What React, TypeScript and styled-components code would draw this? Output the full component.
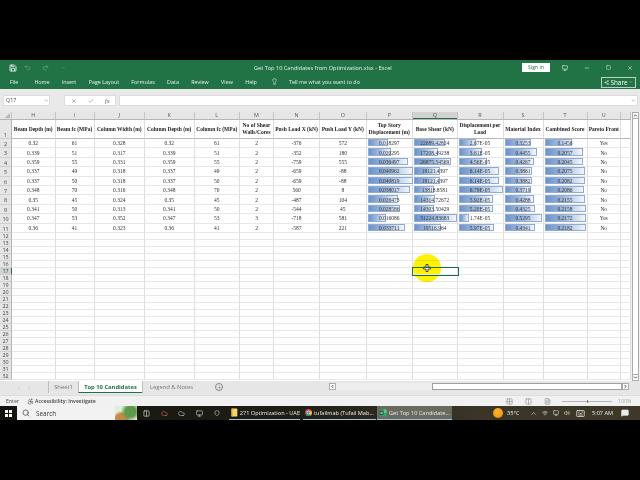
import React from 'react'
import styled, { createGlobalStyle } from 'styled-components'
import {
  Save, Undo2, Redo2, Lightbulb, Check, X, Minus, Square, Share2, ChevronDown, ChevronUp,
  ChevronLeft, ChevronRight, Search, Plus, Grid2x2, Columns2, FileText, Monitor, Volume2, Wifi,
  Keyboard, MessageSquare, Shield, Cloud, Accessibility,
} from 'lucide-react'

const COLS = [12, 43.5, 39, 50.5, 49.5, 45.5, 34, 46, 46.5, 46.5, 44.5, 46, 40, 44, 33.5, 10]
const TEMPLATE = COLS.map((c) => `${c}px`).join(' ')
const LETTERS = ['H', 'I', 'J', 'K', 'L', 'M', 'N', 'O', 'P', 'Q', 'R', 'S', 'T', 'U', '']
const HEADERS = [
  'Beam Depth (m)', 'Beam fc (MPa)', 'Column Width (m)', 'Column Depth (m)', 'Column fc (MPa)',
  'No of Shear Walls/Cores', 'Push Load X (kN)', 'Push Load Y (kN)', 'Top Story Displacement (m)',
  'Base Shear (kN)', 'Displacement per Load', 'Material Index', 'Combined Score', 'Pareto Front', '',
]

type Bar = [string, number]

const ROWS: { plain: string[]; bars: Bar[]; pareto: string }[] = [
  { plain: ['0.32', '61', '0.328', '0.32', '61', '2', '-376', '572'], bars: [['0.018297', 46], ['22689.42824', 71], ['2.67E-05', 38], ['0.3253', 68], ['0.1456', 65]], pareto: 'Yes' },
  { plain: ['0.339', '51', '0.317', '0.339', '51', '2', '-352', '180'], bars: [['0.020295', 52], ['17208.49238', 56], ['3.61E-05', 52], ['0.4455', 83], ['0.2057', 90]], pareto: 'No' },
  { plain: ['0.359', '55', '0.331', '0.359', '55', '2', '-759', '555'], bars: [['0.036497', 89], ['26875.54569', 84], ['4.56E-05', 63], ['0.4267', 76], ['0.2045', 90]], pareto: 'No' },
  { plain: ['0.337', '49', '0.318', '0.337', '49', '2', '-659', '-88'], bars: [['0.040962', 99], ['18121.4397', 60], ['6.14E-05', 90], ['0.3861', 70], ['0.2075', 94]], pareto: 'No' },
  { plain: ['0.337', '50', '0.318', '0.337', '50', '2', '-659', '-88'], bars: [['0.040819', 99], ['18121.4397', 60], ['6.14E-05', 89], ['0.3882', 70], ['0.2082', 94]], pareto: 'No' },
  { plain: ['0.348', '70', '0.316', '0.348', '70', '2', '560', '8'], bars: [['0.038017', 93], ['13818.8581', 46], ['6.79E-05', 98], ['0.3719', 68], ['0.2086', 93]], pareto: 'No' },
  { plain: ['0.35', '45', '0.324', '0.35', '45', '2', '-487', '104'], bars: [['0.026473', 66], ['14314.72672', 49], ['5.92E-05', 77], ['0.4288', 76], ['0.2155', 95]], pareto: 'No' },
  { plain: ['0.341', '50', '0.313', '0.341', '50', '2', '-544', '45'], bars: [['0.028586', 71], ['14303.50429', 47], ['5.20E-05', 76], ['0.4325', 77], ['0.2158', 96]], pareto: 'No' },
  { plain: ['0.347', '53', '0.352', '0.347', '53', '3', '-718', '581'], bars: [['0.016086', 41], ['31224.83683', 99], ['1.74E-05', 24], ['0.5295', 97], ['0.2172', 97]], pareto: 'Yes' },
  { plain: ['0.36', '41', '0.323', '0.36', '41', '2', '-587', '221'], bars: [['0.033711', 82], ['19516.964', 62], ['5.97E-05', 78], ['0.4341', 78], ['0.2182', 97]], pareto: 'No' },
]

const EMPTY_ROWS = Array.from({ length: 21 }, (_, i) => i + 12)

const Global = createGlobalStyle`
  html, body { margin: 0; padding: 0; background: #000; }
  * { box-sizing: border-box; }
`

const Screen = styled.div`
  width: 640px;
  height: 480px;
  position: relative;
  overflow: hidden;
  background: #000;
  display: flex;
  flex-direction: column;
  font-family: 'Open Sans', 'Liberation Sans', sans-serif;
  filter: blur(0.3px);
`

const Letterbox = styled.div`
  flex: 0 0 60px;
  background: #000;
`

const Ribbon = styled.div`
  flex: 0 0 29px;
  background: #217346;
  color: #fff;
  display: flex;
  flex-direction: column;
`

const TitleRow = styled.div`
  height: 15px;
  display: flex;
  align-items: center;
  padding-left: 3px;
  font-size: 5.6px;
  svg { display: block; }
`

const Qat = styled.div<{ $w: number; $dim?: boolean }>`
  width: ${(p) => p.$w}px;
  display: flex;
  justify-content: center;
  opacity: ${(p) => (p.$dim ? 0.4 : 1)};
`

const TitleText = styled.div`
  width: 134px;
  margin-left: 187px;
  white-space: nowrap;
  text-align: center;
  color: #e9f2ed;
`

const SignIn = styled.div`
  width: 28px;
  height: 9px;
  margin-left: 134px;
  background: #fff;
  color: #217346;
  font-size: 5.2px;
  line-height: 9px;
  text-align: center;
`

const WindowButton = styled.div<{ $w: number }>`
  width: ${(p) => p.$w}px;
  display: flex;
  justify-content: center;
`

const TabsRow = styled.div`
  height: 14px;
  display: flex;
  align-items: center;
  font-size: 5.4px;
  color: #e6f0ea;
`

const RibbonTab = styled.div<{ $w: number }>`
  width: ${(p) => p.$w}px;
  text-align: center;
  white-space: nowrap;
`

const TellMe = styled.div`
  width: 72px;
  margin-left: 3px;
  white-space: nowrap;
`

const ShareButton = styled.div`
  width: 35px;
  height: 11px;
  margin-left: 240px;
  border: 1px solid #b9d4c6;
  display: flex;
  align-items: center;
  justify-content: center;
  gap: 1px;
  font-size: 6.4px;
  color: #fff;
`

const FormulaArea = styled.div`
  flex: 0 0 23px;
  background: #e9e9e9;
  display: flex;
  padding: 6px 2px 6px 3px;
  gap: 3px;
  svg { display: block; color: #666; }
`

const NameBox = styled.div`
  width: 47px;
  height: 11px;
  background: #fff;
  border: 1px solid #dcdcdc;
  font-size: 5.4px;
  line-height: 9px;
  color: #444;
  padding-left: 2px;
  display: flex;
  justify-content: space-between;
  align-items: center;
`

const FxBox = styled.div`
  width: 52px;
  height: 11px;
  margin-left: 11px;
  background: #fff;
  border: 1px solid #dcdcdc;
  display: flex;
  align-items: center;
  justify-content: space-around;
  font-family: 'Liberation Serif', serif;
  font-style: italic;
  font-size: 6px;
  color: #555;
`

const FormulaInput = styled.div`
  flex: 1;
  height: 11px;
  background: #fff;
  border: 1px solid #dcdcdc;
  display: flex;
  justify-content: flex-end;
  align-items: center;
  padding-right: 1px;
`

const SheetArea = styled.div`
  flex: 0 0 269px;
  display: flex;
  background: #fff;
`

const Sheet = styled.div`
  width: 631px;
`

const HeaderGrid = styled.div`
  display: grid;
  grid-template-columns: ${TEMPLATE};
  height: 8px;
  background: #e6e6e6;
  border-bottom: 1px solid #b5b5b5;
`

const ColumnLabel = styled.div<{ $active?: boolean }>`
  font-size: 5.4px;
  line-height: 7px;
  text-align: center;
  color: #555;
  border-right: 1px solid #c6c6c6;
  background: ${(p) => (p.$active ? '#d2d2d2' : 'transparent')};
  box-shadow: ${(p) => (p.$active ? 'inset 0 -1px 0 #217346' : 'none')};
`

const Corner = styled.div`
  border-right: 1px solid #c6c6c6;
  position: relative;
  &::after {
    content: '';
    position: absolute;
    right: 1px;
    bottom: 1px;
    border-left: 5px solid transparent;
    border-bottom: 5px solid #b4b4b4;
  }
`

const Row = styled.div<{ $h: number }>`
  display: grid;
  grid-template-columns: ${TEMPLATE};
  height: ${(p) => p.$h}px;
`

const RowLabel = styled.div<{ $active?: boolean }>`
  background: ${(p) => (p.$active ? '#d2d2d2' : '#e6e6e6')};
  border-right: 1px solid ${(p) => (p.$active ? '#217346' : '#b5b5b5')};
  border-bottom: 1px solid #d0d0d0;
  font-size: 5.4px;
  color: #444;
  display: flex;
  align-items: flex-end;
  justify-content: center;
  line-height: 1;
`

const Cell = styled.div<{ $selected?: boolean }>`
  position: relative;
  border-right: 1px solid #dedede;
  border-bottom: 1px solid #e8e8e8;
  font-family: 'Liberation Serif', serif;
  font-size: 5.5px;
  color: #333;
  display: flex;
  align-items: center;
  justify-content: center;
  white-space: nowrap;
  outline: ${(p) => (p.$selected ? '1px solid #1f6b43' : 'none')};
  z-index: ${(p) => (p.$selected ? 1 : 0)};
`

const HeadCell = styled(Cell)`
  border-bottom: 1px solid #b8b8b8;
  font-weight: 700;
  font-size: 5.5px;
  line-height: 7px;
  white-space: normal;
  text-align: center;
  color: #222;
`

const DataBar = styled.div`
  position: absolute;
  left: 1px;
  top: 0;
  bottom: 1px;
  background: linear-gradient(90deg, #6c93ca 0%, #a3bde0 50%, #f3f7fb 100%);
  border: 1px solid #90acd6;
`

const BarValue = styled.span`
  position: relative;
`

const VScroll = styled.div`
  width: 9px;
  background: #f0f0f0;
  display: flex;
  flex-direction: column;
  padding: 0 1px;
`

const ScrollButton = styled.div`
  flex: 0 0 7px;
  background: #fff;
  border: 1px solid #ababab;
  display: flex;
  align-items: center;
  justify-content: center;
  color: #333;
`

const ScrollThumb = styled.div`
  flex: 1;
  background: #fff;
  border: 1px solid #ababab;
  border-top: none;
  border-bottom: none;
`

const TabStrip = styled.div`
  flex: 0 0 14px;
  background: #e6e6e6;
  display: flex;
  align-items: stretch;
  font-size: 5.8px;
  color: #777;
`

const NavArrows = styled.div`
  width: 48px;
  display: flex;
  align-items: center;
  justify-content: center;
  gap: 6px;
  color: #aaa;
`

const SheetTab = styled.div<{ $w: number; $active?: boolean }>`
  width: ${(p) => p.$w}px;
  height: 12px;
  display: flex;
  align-items: center;
  justify-content: center;
  white-space: nowrap;
  background: ${(p) => (p.$active ? '#fff' : 'transparent')};
  color: ${(p) => (p.$active ? '#217346' : '#777')};
  font-weight: ${(p) => (p.$active ? 700 : 400)};
  border-left: 1px solid #bdbdbd;
  border-bottom: ${(p) => (p.$active ? '1px solid #217346' : 'none')};
`

const AddSheet = styled.div`
  width: 8px;
  height: 8px;
  margin: 2px 0 0 15px;
  border: 1px solid #888;
  border-radius: 50%;
  display: flex;
  align-items: center;
  justify-content: center;
  color: #777;
`

const HScroll = styled.div`
  width: 300px;
  margin: 2px 0 5px 106px;
  display: flex;
`

const HScrollEnd = styled.div`
  width: 7px;
  background: #fff;
  border: 1px solid #ababab;
  display: flex;
  align-items: center;
  justify-content: center;
  color: #222;
`

const HScrollTrack = styled.div`
  flex: 1;
  padding-left: 96px;
  display: flex;
  background: #eee;
`

const HScrollThumb = styled.div`
  flex: 1;
  background: #fff;
  border: 1px solid #a0a0a0;
`

const StatusBar = styled.div`
  flex: 0 0 11px;
  background: #f1f1f1;
  border-top: 1px solid #dedede;
  display: flex;
  align-items: center;
  font-size: 5.2px;
  color: #444;
  svg { display: block; }
`

const StatusText = styled.div<{ $w: number; $left: number; $bold?: boolean; $dim?: boolean }>`
  width: ${(p) => p.$w}px;
  margin-left: ${(p) => p.$left}px;
  white-space: nowrap;
  font-weight: ${(p) => (p.$bold ? 600 : 400)};
  color: ${(p) => (p.$dim ? '#aaa' : '#444')};
`

const ViewIcon = styled.div<{ $w: number; $left: number }>`
  width: ${(p) => p.$w}px;
  margin-left: ${(p) => p.$left}px;
  color: #888;
  display: flex;
  justify-content: center;
`

const ZoomSlider = styled.div`
  width: 50px;
  height: 1px;
  margin-left: 11px;
  background: #b5b5b5;
  position: relative;
  &::after {
    content: '';
    position: absolute;
    left: 25px;
    top: -1px;
    width: 1px;
    height: 3px;
    background: #777;
  }
`

const Taskbar = styled.div`
  flex: 0 0 14px;
  background: linear-gradient(90deg, #14140e 0%, #1f1e15 45%, #3a3527 75%, #3f3829 100%);
  display: flex;
  align-items: stretch;
  color: #ececec;
  font-size: 5.6px;
  svg { display: block; }
`

const Start = styled.div`
  width: 17px;
  display: flex;
  align-items: center;
  justify-content: center;
`

const WinLogo = styled.div`
  width: 7px;
  height: 7px;
  display: grid;
  grid-template-columns: 1fr 1fr;
  gap: 1px;
  span { background: #fff; }
`

const SearchBox = styled.div`
  width: 120px;
  background: #f2f2f2;
  color: #333;
  font-size: 6.4px;
  display: flex;
  align-items: center;
  gap: 6px;
  padding-left: 5px;
  position: relative;
  overflow: hidden;
`

const SearchArt = styled.div`
  position: absolute;
  right: 0;
  top: 0;
  bottom: 0;
  width: 22px;
  background: radial-gradient(circle at 70% 40%, #5a9a4a 0 30%, transparent 55%),
    radial-gradient(circle at 30% 100%, #c58b4a 0 30%, transparent 45%),
    linear-gradient(180deg, #dcefd8, #f0f0e0);
`

const TrayIcon = styled.div<{ $w: number; $left?: number }>`
  width: ${(p) => p.$w}px;
  margin-left: ${(p) => p.$left ?? 0}px;
  display: flex;
  align-items: center;
  justify-content: center;
`

const TaskItem = styled.div<{ $w: number; $left: number; $active?: boolean }>`
  width: ${(p) => p.$w}px;
  margin-left: ${(p) => p.$left}px;
  display: flex;
  align-items: center;
  gap: 2px;
  padding-left: 2px;
  white-space: nowrap;
  overflow: hidden;
  background: ${(p) => (p.$active ? '#6a6a60' : 'transparent')};
  border-bottom: 1px solid #9cc3e0;
`

const Sun = styled.div`
  width: 10px;
  height: 10px;
  margin: 2px 0 0 41px;
  border-radius: 50%;
  background: radial-gradient(circle at 45% 40%, #ffb52e, #ee8a0c);
`

const TrayText = styled.div<{ $w: number; $left: number }>`
  width: ${(p) => p.$w}px;
  margin-left: ${(p) => p.$left}px;
  align-self: center;
  white-space: nowrap;
`

const Cursor = styled.div`
  position: absolute;
  left: 413px;
  top: 254px;
  width: 28px;
  height: 28px;
  border-radius: 50%;
  background: #fff200;
  mix-blend-mode: multiply;
`

const CursorCross = styled.svg`
  position: absolute;
  left: 423px;
  top: 264px;
  width: 8px;
  height: 8px;
`

const ChromeIcon = () => (
  <svg width="7" height="7" viewBox="0 0 16 16">
    <circle cx="8" cy="8" r="8" fill="#db4437" />
    <path d="M8 8 L1 12 A8 8 0 0 0 12 15 Z" fill="#0f9d58" />
    <path d="M8 8 L12 15 A8 8 0 0 0 15.5 5 L8 5 Z" fill="#f4b400" />
    <circle cx="8" cy="8" r="3.6" fill="#4285f4" stroke="#fff" strokeWidth="1.4" />
  </svg>
)

const ExcelIcon = () => (
  <svg width="8" height="8" viewBox="0 0 16 16">
    <rect x="5" y="1" width="10" height="14" rx="1" fill="#2fa866" />
    <rect x="10" y="1" width="5" height="7" fill="#5fc98f" />
    <rect x="1" y="4" width="8" height="8" fill="#14663c" />
    <path d="M3 6 L7 10 M7 6 L3 10" stroke="#fff" strokeWidth="1.2" />
  </svg>
)

const FolderIcon = () => (
  <svg width="7" height="9" viewBox="0 0 14 18">
    <rect x="1" y="1" width="12" height="16" rx="1" fill="#f6d56b" />
    <rect x="1" y="1" width="3" height="16" fill="#e3b93f" />
  </svg>
)

const DataRow = ({ row, index }: { row: (typeof ROWS)[number]; index: number }) => (
  <Row $h={9.4}>
    <RowLabel>{index + 2}</RowLabel>
    {row.plain.map((value, i) => (
      <Cell key={i}>{value}</Cell>
    ))}
    {row.bars.map(([value, pct], i) => (
      <Cell key={i}>
        <DataBar style={{ width: `${pct}%` }} />
        <BarValue>{value}</BarValue>
      </Cell>
    ))}
    <Cell>{row.pareto}</Cell>
    <Cell />
  </Row>
)

export default function App() {
  return (
    <Screen>
      <Global />
      <Letterbox />
      <Ribbon>
        <TitleRow>
          <Qat $w={20}><Save size={8} strokeWidth={2.4} /></Qat>
          <Qat $w={8} $dim><Undo2 size={7} /></Qat>
          <Qat $w={28} $dim><Redo2 size={7} /></Qat>
          <Qat $w={8} $dim><ChevronDown size={5} /></Qat>
          <TitleText>Get Top 10 Candidates from Optimization.xlsx  -  Excel</TitleText>
          <SignIn>Sign in</SignIn>
          <WindowButton $w={30}><Monitor size={6} /></WindowButton>
          <WindowButton $w={13}><Minus size={6} /></WindowButton>
          <WindowButton $w={30}><Square size={5} /></WindowButton>
          <WindowButton $w={14}><X size={6} /></WindowButton>
        </TitleRow>
        <TabsRow>
          <RibbonTab $w={28}>File</RibbonTab>
          <RibbonTab $w={28}>Home</RibbonTab>
          <RibbonTab $w={26}>Insert</RibbonTab>
          <RibbonTab $w={44}>Page Layout</RibbonTab>
          <RibbonTab $w={34}>Formulas</RibbonTab>
          <RibbonTab $w={26}>Data</RibbonTab>
          <RibbonTab $w={28}>Review</RibbonTab>
          <RibbonTab $w={26}>View</RibbonTab>
          <RibbonTab $w={22}>Help</RibbonTab>
          <RibbonTab $w={24}><Lightbulb size={7} /></RibbonTab>
          <TellMe>Tell me what you want to do</TellMe>
          <ShareButton><Share2 size={5} />Share<ChevronDown size={4} /></ShareButton>
        </TabsRow>
      </Ribbon>
      <FormulaArea>
        <NameBox>Q17<ChevronDown size={5} /></NameBox>
        <FxBox>
          <X size={6} />
          <Check size={6} />
          <span>fx</span>
        </FxBox>
        <FormulaInput><ChevronDown size={5} /></FormulaInput>
      </FormulaArea>
      <SheetArea>
        <Sheet>
          <HeaderGrid>
            <Corner />
            {LETTERS.map((l) => (
              <ColumnLabel key={l} $active={l === 'Q'}>{l}</ColumnLabel>
            ))}
          </HeaderGrid>
          <Row $h={19}>
            <RowLabel>1</RowLabel>
            {HEADERS.map((h, i) => (
              <HeadCell key={i}>{h}</HeadCell>
            ))}
          </Row>
          {ROWS.map((row, i) => (
            <DataRow key={i} row={row} index={i} />
          ))}
          {EMPTY_ROWS.map((n) => (
            <Row key={n} $h={7}>
              <RowLabel $active={n === 17}>{n}</RowLabel>
              {LETTERS.map((l) => (
                <Cell key={l} $selected={n === 17 && l === 'Q'} />
              ))}
            </Row>
          ))}
        </Sheet>
        <VScroll>
          <ScrollButton><ChevronUp size={5} strokeWidth={4} /></ScrollButton>
          <ScrollThumb />
          <ScrollButton><ChevronDown size={5} strokeWidth={4} /></ScrollButton>
        </VScroll>
      </SheetArea>
      <TabStrip>
        <NavArrows>
          <ChevronLeft size={5} />
          <ChevronRight size={5} />
        </NavArrows>
        <SheetTab $w={30}>Sheet1</SheetTab>
        <SheetTab $w={64} $active>Top 10 Candidates</SheetTab>
        <SheetTab $w={58}>Legend &amp; Notes</SheetTab>
        <AddSheet><Plus size={5} /></AddSheet>
        <HScroll>
          <HScrollEnd><ChevronLeft size={5} strokeWidth={4} /></HScrollEnd>
          <HScrollTrack><HScrollThumb /></HScrollTrack>
          <HScrollEnd><ChevronRight size={5} strokeWidth={4} /></HScrollEnd>
        </HScroll>
      </TabStrip>
      <StatusBar>
        <StatusText $w={21} $left={6}>Enter</StatusText>
        <Accessibility size={7} />
        <StatusText $w={66} $left={1} $bold>Accessibility: Investigate</StatusText>
        <ViewIcon $w={8} $left={404}><Grid2x2 size={7} /></ViewIcon>
        <ViewIcon $w={8} $left={11}><Columns2 size={7} /></ViewIcon>
        <ViewIcon $w={8} $left={11}><FileText size={7} /></ViewIcon>
        <ZoomSlider />
        <StatusText $w={14} $left={6} $dim>100%</StatusText>
      </StatusBar>
      <Taskbar>
        <Start>
          <WinLogo><span /><span /><span /><span /></WinLogo>
        </Start>
        <SearchBox>
          <Search size={8} />
          Search
          <SearchArt />
        </SearchBox>
        <TrayIcon $w={18}><Columns2 size={7} /></TrayIcon>
        <TrayIcon $w={18}><Cloud size={7} color="#d66" /></TrayIcon>
        <TrayIcon $w={17}><Cloud size={7} color="#bcd" /></TrayIcon>
        <TrayIcon $w={18}><Monitor size={7} color="#cde" /></TrayIcon>
        <TrayIcon $w={18}><Shield size={6} /></TrayIcon>
        <TaskItem $w={71} $left={3}><FolderIcon />271 Optimization - UAE</TaskItem>
        <TaskItem $w={73} $left={3}><ChromeIcon />tufailmab (Tufail Mab...</TaskItem>
        <TaskItem $w={75} $left={1} $active><ExcelIcon />Get Top 10 Candidate...</TaskItem>
        <Sun />
        <TrayText $w={18} $left={4}>35°C</TrayText>
        <TrayIcon $w={12} $left={2}><ChevronUp size={7} /></TrayIcon>
        <TrayIcon $w={12}><Wifi size={6} /></TrayIcon>
        <TrayIcon $w={10}><Monitor size={6} /></TrayIcon>
        <TrayIcon $w={11}><Volume2 size={6} /></TrayIcon>
        <TrayIcon $w={16}><Keyboard size={9} /></TrayIcon>
        <TrayText $w={22} $left={4}>5:07 AM</TrayText>
        <TrayIcon $w={10} $left={6}><MessageSquare size={8} fill="#eee" /></TrayIcon>
      </Taskbar>
      <Cursor />
      <CursorCross viewBox="0 0 16 16">
        <path d="M6 1 H10 V6 H15 V10 H10 V15 H6 V10 H1 V6 H6 Z" fill="#fff" stroke="#222" strokeWidth="1.6" />
      </CursorCross>
    </Screen>
  )
}
